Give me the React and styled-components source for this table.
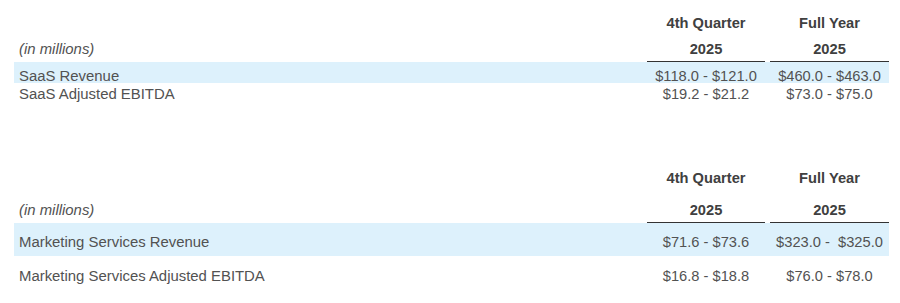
import React from "react";
import styled, { createGlobalStyle } from "styled-components";

const Global = createGlobalStyle`
  html, body { margin: 0; padding: 0; background: #ffffff; }
  body {
    font-family: Arial, "Liberation Sans", Helvetica, sans-serif;
    font-size: 14.67px;
    color: #525252;
  }
`;

const Page = styled.div`
  width: 900px;
  display: flex;
  flex-direction: column;
`;

const Table = styled.section`
  display: flex;
  flex-direction: column;
  margin-top: ${(p) => p.$top}px;
`;

const Row = styled.div`
  display: grid;
  grid-template-columns: 1fr 118px 119px;
  column-gap: 5px;
  margin: 0 11px 0 14px;
  height: ${(p) => p.$h}px;
  background: ${(p) => (p.$shade ? "#ddf1fc" : "transparent")};
`;

const Cell = styled.div`
  box-sizing: border-box;
  padding-top: ${(p) => p.$pt || 0}px;
  line-height: ${(p) => p.$lh}px;
  white-space: pre;
`;

const Label = styled(Cell)`
  padding-left: 5px;
  font-size: 14.9px;
  font-style: ${(p) => (p.$italic ? "italic" : "normal")};
`;

const Value = styled(Cell)`
  text-align: center;
`;

const Head = styled(Cell)`
  text-align: center;
  font-weight: bold;
  color: #404040;
  border-bottom: ${(p) => (p.$rule ? "1px solid #333333" : "none")};
`;

const tables = [
  {
    top: 10,
    h1: { h: 26, pt: 0, lh: 26 },
    h2: { h: 26, pt: 1, lh: 24 },
    rows: [
      { label: "SaaS Revenue", q: "$118.0 - $121.0", y: "$460.0 - $463.0", h: 21, pt: 6, lh: 16, shade: true },
      { label: "SaaS Adjusted EBITDA", q: "$19.2 - $21.2", y: "$73.0 - $75.0", h: 21, pt: 3, lh: 16 },
    ],
  },
  {
    top: 58,
    h1: { h: 32, pt: 0, lh: 32 },
    h2: { h: 29, pt: 5, lh: 23 },
    rows: [
      { label: "Marketing Services Revenue", q: "$71.6 - $73.6", y: "$323.0 -  $325.0", h: 33, pt: 6, lh: 27, shade: true },
      { label: "Marketing Services Adjusted EBITDA", q: "$16.8 - $18.8", y: "$76.0 - $78.0", h: 33, pt: 7, lh: 26 },
    ],
  },
];

export default function App() {
  return (
    <>
      <Global />
      <Page>
        {tables.map((t, i) => (
          <Table key={i} $top={t.top}>
            <Row $h={t.h1.h}>
              <Label $lh={t.h1.lh} />
              <Head $pt={t.h1.pt} $lh={t.h1.lh}>4th Quarter</Head>
              <Head $pt={t.h1.pt} $lh={t.h1.lh}>Full Year</Head>
            </Row>
            <Row $h={t.h2.h}>
              <Label $italic $pt={t.h2.pt} $lh={t.h2.lh}>(in millions)</Label>
              <Head $rule $pt={t.h2.pt} $lh={t.h2.lh}>2025</Head>
              <Head $rule $pt={t.h2.pt} $lh={t.h2.lh}>2025</Head>
            </Row>
            {t.rows.map((r) => (
              <Row key={r.label} $h={r.h} $shade={r.shade}>
                <Label $pt={r.pt} $lh={r.lh}>{r.label}</Label>
                <Value $pt={r.pt} $lh={r.lh}>{r.q}</Value>
                <Value $pt={r.pt} $lh={r.lh}>{r.y}</Value>
              </Row>
            ))}
          </Table>
        ))}
      </Page>
    </>
  );
}
